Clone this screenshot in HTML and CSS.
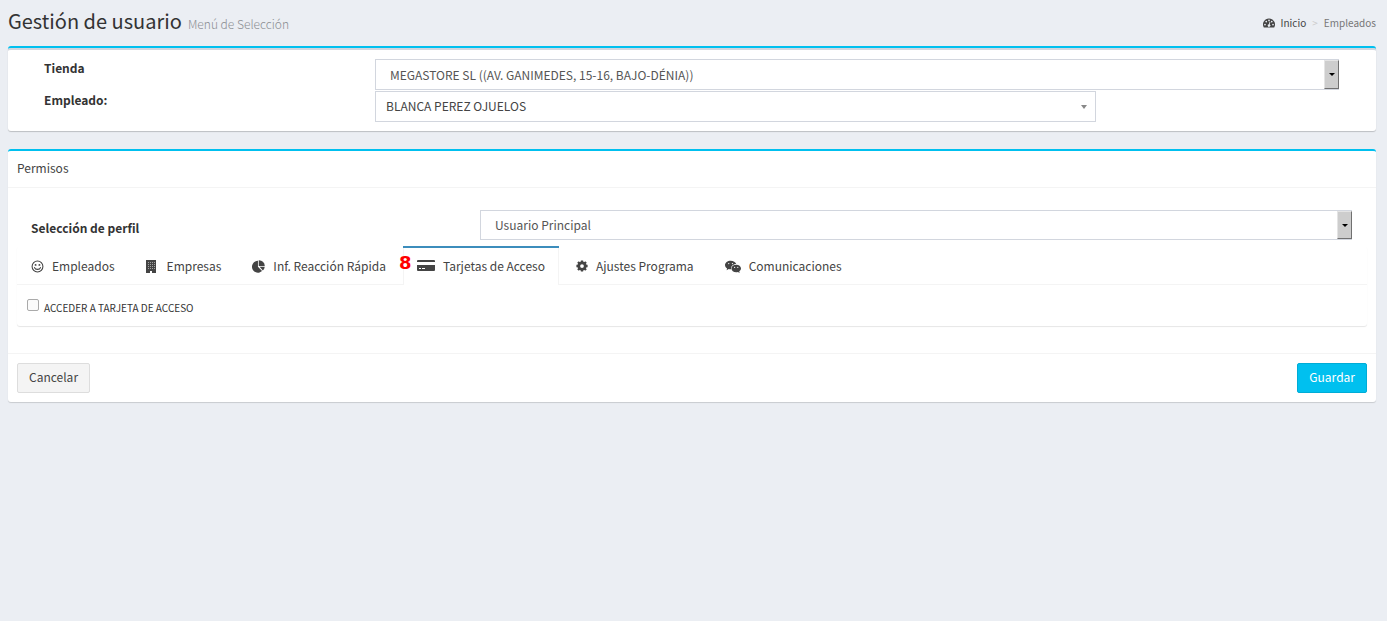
FILE: index.html
```html
<!DOCTYPE html>
<html lang="es">
<head>
<meta charset="utf-8">
<title>Gestión de usuario</title>
<link rel="stylesheet" href="styles.css">
</head>
<body>
<header class="page-header">
  <h1 class="page-title">Gestión de usuario <small class="subtitle">Menú de Selección</small></h1>
  <nav class="breadcrumb" aria-label="Ruta">
    <a class="crumb-home" href="#">
      <svg class="icon icon-home" viewBox="0 0 24 20" aria-hidden="true"><path fill="currentColor" fill-rule="evenodd" d="M12 1A12 12 0 0 0 1.600 19h20.800A12 12 0 0 0 12 1zM4 11.500a1.700 1.700 0 1 1 0 3.400 1.700 1.700 0 0 1 0-3.400zM6.500 5.500a1.700 1.700 0 1 1 0 3.400 1.700 1.700 0 0 1 0-3.400zM12 3.200a1.700 1.700 0 1 1 0 3.400 1.700 1.700 0 0 1 0-3.400zM17.500 5.500a1.700 1.700 0 1 1 0 3.400 1.700 1.700 0 0 1 0-3.400zM20 11.500a1.700 1.700 0 1 1 0 3.400 1.700 1.700 0 0 1 0-3.400zM13.200 7.500l1.500.4-1.200 5a2.600 2.600 0 1 1-1.600-.4z"/></svg>
      Inicio</a>
    <span class="crumb-sep">&gt;</span>
    <span class="crumb-current">Empleados</span>
  </nav>
</header>

<main>
  <section class="box box-filter">
    <div class="filter-row">
      <label class="label" for="tienda">Tienda</label>
      <div class="select-wrap">
        <select class="select" id="tienda"><option>MEGASTORE SL ((AV. GANIMEDES, 15-16, BAJO-DÉNIA))</option></select>
        <span class="drop-button"></span>
      </div>
    </div>
    <div class="filter-row">
      <label class="label" for="empleado">Empleado:</label>
      <div class="select-wrap select-narrow">
        <select class="select select-flat" id="empleado"><option>BLANCA PEREZ OJUELOS</option></select>
        <span class="drop-arrow"></span>
      </div>
    </div>
  </section>

  <section class="box">
    <h2 class="box-title">Permisos</h2>
    <div class="box-body">
      <div class="profile-row">
        <label class="label profile-label" for="perfil">Selección de perfil</label>
        <div class="select-wrap">
          <select class="select" id="perfil"><option>Usuario Principal</option></select>
          <span class="drop-button"></span>
        </div>
      </div>
      <div class="tabs">
        <div class="tab-list" role="tablist">
          <button class="tab" type="button" role="tab">
            <svg class="icon icon-md" viewBox="0 0 24 24" aria-hidden="true"><circle cx="12" cy="12" r="10" fill="none" stroke="currentColor" stroke-width="2"/><circle cx="8.500" cy="9" r="1.800" fill="currentColor"/><circle cx="15.500" cy="9" r="1.800" fill="currentColor"/><path d="M6.500 14c1.300 4.500 9.700 4.500 11 0" fill="none" stroke="currentColor" stroke-width="2" stroke-linecap="round"/></svg>
            Empleados</button>
          <button class="tab" type="button" role="tab">
            <svg class="icon icon-md" viewBox="0 0 13 13" aria-hidden="true"><path fill="currentColor" fill-rule="evenodd" d="M0 0h10v13H6v-2H4v2H0z"/><path d="M2 2.500h7M2 4.500h7M2 6.500h7M2 8.500h7" stroke="#fff" stroke-opacity=".5" stroke-dasharray="1 1" fill="none"/></svg>
            Empresas</button>
          <button class="tab" type="button" role="tab">
            <svg class="icon icon-md" viewBox="0 0 24 24" aria-hidden="true"><path fill="currentColor" d="M11 1.500V12.500l7.500 8A11 11 0 1 1 11 1.500z"/><path fill="currentColor" d="M12.500 0.500A10.500 10.500 0 0 1 23.500 11H12.500z"/><path fill="currentColor" d="M14 12.500h9.500a10 10 0 0 1-3.500 7z"/></svg>
            Inf. Reacción Rápida</button>
          <button class="tab active" type="button" role="tab" aria-selected="true">
            <span class="marker">8</span>
            <svg class="icon icon-card" viewBox="0 0 18 12" aria-hidden="true"><path fill="currentColor" d="M1 0h16a1 1 0 0 1 1 1v1H0V1a1 1 0 0 1 1-1zM0 5h18v5a1 1 0 0 1-1 1H1a1 1 0 0 1-1-1z"/><path d="M2 8.500h2M5 8.500h3" stroke="#fff"/></svg>
            Tarjetas de Acceso</button>
          <button class="tab" type="button" role="tab">
            <svg class="icon icon-sm" viewBox="0 0 24 24" aria-hidden="true"><circle cx="12" cy="12" r="6.500" fill="none" stroke="currentColor" stroke-width="5.500"/><path d="M12 .8v4M12 19.200v4M.8 12h4M19.200 12h4M4 4l3 3M17 17l3 3M4 20l3-3M17 7l3-3" stroke="currentColor" stroke-width="4.600"/></svg>
            Ajustes Programa</button>
          <button class="tab" type="button" role="tab">
            <svg class="icon icon-chat" viewBox="0 0 30 24" aria-hidden="true"><path fill="currentColor" d="M10.500 1C4.700 1 0 4.700 0 9.200c0 2.600 1.500 4.900 3.900 6.400L3 19l4-2.100c1.500.4 3 .5 4.500.4C10.500 11.500 15 7.300 21 7.200 20 3.500 15.700 1 10.500 1z"/><path fill="currentColor" d="M21 8.500c-5 0-8.900 3.200-8.900 7.200S16 23 21 23c1.100 0 2.200-.2 3.200-.5L27.500 24l-.8-2.900c2-1.300 3.300-3.200 3.300-5.400 0-4-4-7.200-9-7.200z"/><g fill="#fff"><circle cx="7" cy="6.500" r="1.200"/><circle cx="14" cy="6.500" r="1.200"/><circle cx="18" cy="13.500" r="1.200"/><circle cx="24" cy="13.500" r="1.200"/></g></svg>
            Comunicaciones</button>
        </div>
        <div class="tab-panel" role="tabpanel">
          <label class="check"><input class="check-box" type="checkbox"> ACCEDER A TARJETA DE ACCESO</label>
        </div>
      </div>
    </div>
    <footer class="box-footer">
      <button class="btn" type="button">Cancelar</button>
      <button class="btn btn-info" type="button">Guardar</button>
    </footer>
  </section>
</main>
</body>
</html>
```
FILE: styles.css
```css
* {
  box-sizing: border-box;
}

body {
  margin: 0;
  padding: 0 11px 0 8px;
  background: #ebeef3;
  color: #333;
  font: 12px/18px "Noto Sans CJK SC", "Open Sans", sans-serif;
}

button,
select {
  font: inherit;
  color: inherit;
}

.page-header {
  display: flex;
  justify-content: space-between;
  align-items: center;
  height: 46px;
}

.page-title {
  display: flex;
  align-items: baseline;
  gap: 6px;
  margin: 0;
  padding-bottom: 2px;
  font-size: 20px;
  line-height: 28px;
  font-weight: 400;
}

.subtitle {
  font-size: 12px;
  font-weight: 300;
  color: #8a8d92;
}

.breadcrumb {
  display: flex;
  align-items: center;
  gap: 6px;
  font-size: 10px;
  color: #777;
}

.crumb-home {
  display: flex;
  align-items: center;
  gap: 6px;
  color: #444;
  text-decoration: none;
}

.crumb-sep {
  color: #ccc;
}

.icon {
  flex: none;
}

.icon-home {
  width: 12px;
  height: 10px;
}

.icon-sm {
  width: 12px;
  height: 12px;
}

.icon-md {
  width: 13px;
  height: 13px;
}

.icon-card {
  width: 18px;
  height: 12px;
}

.icon-chat {
  width: 16px;
  height: 13px;
}

.box {
  margin-bottom: 18px;
  border-top: 2px solid #00c0ef;
  border-radius: 3px;
  background: #fff;
  box-shadow: 0 1px 1px rgba(0, 0, 0, 0.15);
}

.box-filter {
  display: grid;
  gap: 1px;
  padding: 11px 37px 9px 36px;
  box-shadow: inset 0 2px #d2d6de, 0 1px 1px rgba(0, 0, 0, 0.2);
}

.filter-row {
  display: grid;
  grid-template-columns: 331fr 964fr;
}

.label {
  font-weight: 700;
}

.select-wrap {
  position: relative;
  display: flex;
}

.select-narrow {
  width: 74.8%;
}

.select {
  width: 100%;
  height: 31px;
  padding: 0 14px;
  border: 1px solid #d2d6de;
  border-radius: 0;
  background: #fff;
  color: #555;
  appearance: none;
}

.select-flat {
  padding: 0 10px 2px;
  color: #444;
}

.drop-button {
  position: absolute;
  top: 1px;
  right: 0;
  bottom: 1px;
  display: grid;
  place-items: center;
  width: 15px;
  border: 1px solid #e4e4e4;
  border-right-color: #707070;
  border-bottom-color: #707070;
  background: #cdcdcd;
  pointer-events: none;
}

.drop-button::after {
  content: "";
  border: 3px solid transparent;
  border-top-color: #000;
  border-bottom: 0;
}

.drop-arrow {
  position: absolute;
  top: 14px;
  right: 9px;
  border: 3px solid transparent;
  border-top: 4px solid #888;
  border-bottom: 0;
  pointer-events: none;
}

.box-title {
  margin: 0;
  padding: 8px 9px 10px;
  border-bottom: 1px solid #f4f4f4;
  font-size: 12px;
  line-height: 18px;
  font-weight: 400;
  color: #444;
}

.box-body {
  padding: 22px 9px 27px;
}

.profile-row {
  display: grid;
  grid-template-columns: 449fr 872fr;
  padding: 0 15px 0 14px;
}

.profile-row .select {
  height: 30px;
}

.profile-label {
  padding-top: 9px;
}

.tabs {
  margin-top: 6px;
  border-radius: 3px;
  box-shadow: 0 1px 1px rgba(0, 0, 0, 0.1);
}

.tab-list {
  display: flex;
  gap: 3px;
  border-bottom: 1px solid #f4f4f4;
}

.tab {
  position: relative;
  display: flex;
  align-items: center;
  gap: 8px;
  height: 38px;
  padding: 0 14px;
  border: 0;
  border-top: 2px solid transparent;
  background: none;
  color: #444;
}

.tab.active {
  margin-bottom: -1px;
  height: 39px;
  padding-bottom: 1px;
  border-top-color: #3c8dbc;
  background: #fff;
  box-shadow: inset 1px 0 #f4f4f4, inset -1px 0 #f4f4f4;
}

.marker {
  position: absolute;
  top: 6px;
  left: -4px;
  font: 700 18px/18px "DejaVu Sans", sans-serif;
  color: #f00;
}

.tab-panel {
  padding: 13px 10px 8px;
}

.check {
  display: flex;
  align-items: flex-start;
  gap: 5px;
  font-size: 10px;
  line-height: 20px;
}

.check-box {
  appearance: none;
  width: 12px;
  height: 12px;
  margin: 1px 0 0;
  border: 1px solid #aaa;
  border-radius: 2px;
  background: #fbfbfb;
}

.check-box:checked {
  background: #3c8dbc;
}

.box-footer {
  display: flex;
  justify-content: space-between;
  padding: 9px;
  border-top: 1px solid #f4f4f4;
}

.btn {
  height: 30px;
  padding: 0 11px 2px;
  border: 1px solid #ddd;
  border-radius: 2px;
  background: #f4f4f4;
  color: #444;
}

.btn-info {
  border-color: #00acd6;
  background: #00c0ef;
  color: #fff;
}
```
